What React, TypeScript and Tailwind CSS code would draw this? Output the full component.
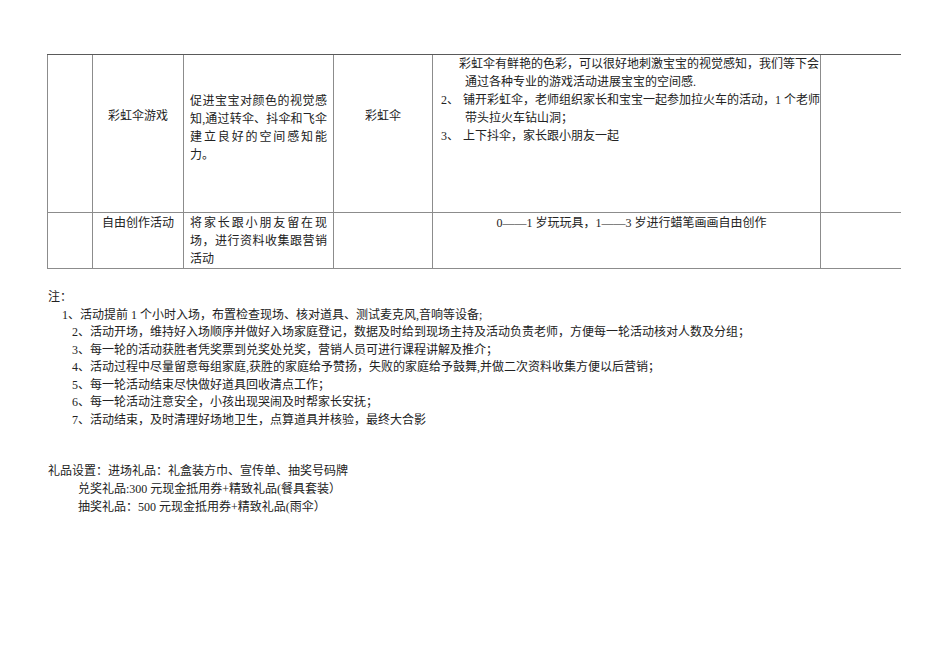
const font = {
  fontFamily: '"Liberation Serif", "Noto Sans CJK SC", serif',
};

const hLine = "border-t border-t-[#5a5a5a]";
const vLine = "border-l border-l-[#8c8c8c]";

function Cell({
  className = "",
  children,
}: {
  className?: string;
  children?: React.ReactNode;
}) {
  return (
    <td className={`${hLine} ${vLine} border-b border-b-[#8c8c8c] p-0 align-top ${className}`}>
      {children}
    </td>
  );
}

const notes = [
  "1、活动提前 1 个小时入场，布置检查现场、核对道具、测试麦克风,音响等设备;",
  "2、活动开场，维持好入场顺序并做好入场家庭登记，数据及时给到现场主持及活动负责老师，方便每一轮活动核对人数及分组；",
  "3、每一轮的活动获胜者凭奖票到兑奖处兑奖，营销人员可进行课程讲解及推介；",
  "4、活动过程中尽量留意每组家庭,获胜的家庭给予赞扬，失败的家庭给予鼓舞,并做二次资料收集方便以后营销；",
  "5、每一轮活动结束尽快做好道具回收清点工作；",
  "6、每一轮活动注意安全，小孩出现哭闹及时帮家长安抚；",
  "7、活动结束，及时清理好场地卫生，点算道具并核验，最终大合影",
];

export default function App() {
  return (
    <div className="min-h-[672px] w-[950px] bg-white pt-[54px] text-[12px] text-[#222]" style={font}>
      <table className="ml-[47px] w-[853px] table-fixed border-collapse">
        <colgroup>
          <col className="w-[45px]" />
          <col className="w-[91px]" />
          <col className="w-[150px]" />
          <col className="w-[99px]" />
          <col className="w-[388px]" />
          <col className="w-[80px]" />
        </colgroup>
        <tbody>
          <tr className="h-[158px]">
            <Cell />
            <Cell className="pt-[52px] text-center leading-[18px]">彩虹伞游戏</Cell>
            <Cell className="px-[6px] pt-[37px] text-justify leading-[18px]">
              促进宝宝对颜色的视觉感知,通过转伞、抖伞和飞伞建立良好的空间感知能力。
            </Cell>
            <Cell className="pt-[52px] text-center leading-[18px]">彩虹伞</Cell>
            <Cell className="pl-[8px] leading-[18px] whitespace-nowrap">
              <div className="pl-[18px]">彩虹伞有鲜艳的色彩，可以很好地刺激宝宝的视觉感知，我们等下会</div>
              <div className="pl-[24px]">通过各种专业的游戏活动进展宝宝的空间感.</div>
              <div className="flex">
                <span className="w-[22px]">2、</span>
                <span>铺开彩虹伞，老师组织家长和宝宝一起参加拉火车的活动，1 个老师</span>
              </div>
              <div className="pl-[24px]">带头拉火车钻山洞；</div>
              <div className="flex">
                <span className="w-[22px]">3、</span>
                <span>上下抖伞，家长跟小朋友一起</span>
              </div>
            </Cell>
            <Cell />
          </tr>
          <tr className="h-[55px]">
            <Cell />
            <Cell className="pt-[1px] text-center leading-[18px]">自由创作活动</Cell>
            <Cell className="px-[6px] pt-[1px] text-justify leading-[18px]">
              将家长跟小朋友留在现场，进行资料收集跟营销活动
            </Cell>
            <Cell />
            <Cell className="pt-[1px] pl-[10px] text-center leading-[18px]">
              0——1 岁玩玩具，1——3 岁进行蜡笔画画自由创作
            </Cell>
            <Cell />
          </tr>
        </tbody>
      </table>

      <div className="mt-[20px] pl-[48px] leading-[17.5px]">
        <div>注：</div>
        {notes.map((n, i) => (
          <div key={i} className={i === 0 ? "pl-[14px]" : "pl-[24px]"}>
            {n}
          </div>
        ))}
      </div>

      <div className="mt-[33px] pl-[48px] leading-[18px]">
        <div>礼品设置：进场礼品：礼盒装方巾、宣传单、抽奖号码牌</div>
        <div className="pl-[30px]">兑奖礼品:300 元现金抵用券+精致礼品(餐具套装）</div>
        <div className="pl-[30px]">抽奖礼品：500 元现金抵用券+精致礼品(雨伞）</div>
      </div>
    </div>
  );
}
